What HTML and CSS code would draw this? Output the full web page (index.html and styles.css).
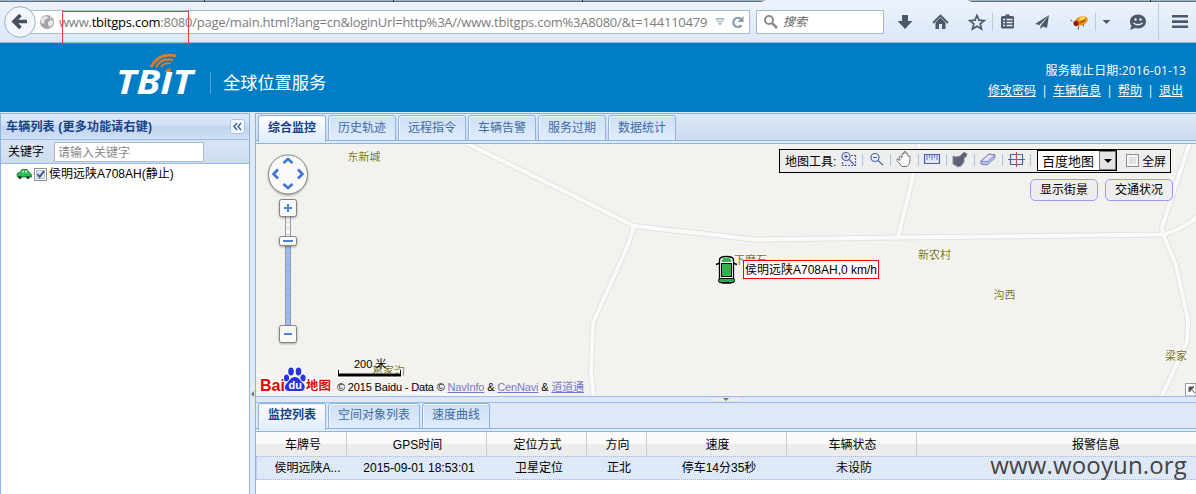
FILE: index.html
```html
<!DOCTYPE html>
<html lang="zh-CN">
<head>
<meta charset="utf-8">
<title>TBIT 全球位置服务</title>
<link rel="stylesheet" href="styles.css">
</head>
<body>
<div class="browser">
  <svg class="tab-edges" viewBox="0 0 1196 2" width="1196" height="2"><path d="M0 0H766L762 2H0zM967 0H1196V2H971z" fill="#9fb3c9"/><path d="M0 1.5H762M971 1.5H1196" stroke="#5f7080"/><path d="M204.500 0V2M582.500 0V2M393.500 0V2M1150.500 0V2" stroke="#333"/></svg>
  <div class="url">
    <svg class="globe" width="16" height="16" viewBox="0 0 16 16"><circle cx="8" cy="8" r="7" fill="#a5a5a5"/><path d="M2 5l4-3 3 1-1 2-3 1 1 2-2 2-2-2zM9 8l3-2 2 1v3l-3 3-2-2zM11 2l2 2-2 1z" fill="#e9e9e9"/></svg>
    <span class="address">www.<b>tbitgps.com</b>:8080/page/main.html?lang=cn&amp;loginUrl=http%3A//www.tbitgps.com%3A8080/&amp;t=1441104793</span>
    <svg class="url-tools" width="32" height="16" viewBox="0 0 32 16"><path d="M2 4.500h8L6 11z" fill="#d5dde6" stroke="#a5b3c2"/><path d="M27.500 11.200a4.600 4.600 0 1 1-.3-6" fill="none" stroke="#8799ac" stroke-width="2.200"/><path d="M29.500 2v6h-6z" fill="#8799ac"/></svg>
  </div>
  <svg class="back" width="32" height="32" viewBox="0 0 32 32"><circle cx="16" cy="16" r="15.300" fill="#f3f7fd" stroke="#9aaec9"/><path d="M23 15.500H12M16.500 9l-6.500 6.500L16.500 22" fill="none" stroke="#46525f" stroke-width="3.600"/></svg>
  <div class="search">
    <svg width="16" height="16" viewBox="0 0 16 16"><circle cx="6" cy="6" r="4" fill="none" stroke="#8b8b8b" stroke-width="2"/><path d="M9 9l5 5" stroke="#8b8b8b" stroke-width="2.500"/></svg>
    <i>搜索</i>
  </div>
  <svg class="actions" width="298" height="40" viewBox="898 0 298 40">
    <g fill="#4d5966">
      <path d="M902 15h6v6h4.500L905 29l-7.500-8H902z"/>
      <path d="M940.500 17.500l-5 5v6.500h3.500v-5h3v5h3.500v-6.500z"/>
      <path d="M1001 17.500q0-1.500 1.500-1.500h3v-1.500h4V16h3q1.500 0 1.500 1.500V27q0 1.500-1.500 1.500h-10q-1.500 0-1.500-1.500z"/>
      <path d="M1049 15l-14 9 4.500 1zM1049 15l-8.500 11v3l2.500-2.500 4 1.500z"/>
      <path d="M1102.500 20h8l-4 4z"/>
      <path d="M1138 14.500c4.500 0 8 3 8 7s-3.500 7-8 7l-3-.5-5 2 1.500-4c-1-1-1.500-3-1.500-4.500 0-4 3.500-7 8-7z"/>
      <path d="M1172 15h16v2.600h-16zM1172 20.300h16v2.600h-16zM1172 25.500h16v2.600h-16z"/>
    </g>
    <path d="M933 23l7.500-7.500L948 23" fill="none" stroke="#4d5966" stroke-width="1.800"/>
    <path d="M977 15.500l2 4.700 5.200.4-4 3.300 1.300 5-4.500-2.700-4.500 2.700 1.300-5-4-3.300 5.200-.4z" fill="none" stroke="#4d5966" stroke-width="1.700"/>
    <path d="M1003 19.500h2M1006.500 19.500h6M1003 22.500h2M1006.500 22.500h6M1003 25.500h2M1006.500 25.500h6" stroke="#e8f0f9" stroke-width="1.500"/>
    <circle cx="1135.500" cy="19.500" r="1.200" fill="#e8f0f9"/><circle cx="1140.500" cy="19.500" r="1.200" fill="#e8f0f9"/><path d="M1133.500 23q4.500 3.500 9 0" fill="none" stroke="#e8f0f9" stroke-width="1.300"/>
    <g transform="rotate(-22 1081 21)"><ellipse cx="1081" cy="21" rx="7" ry="4.300" fill="#f28a12"/><ellipse cx="1083" cy="19" rx="3.500" ry="1.500" fill="#ffd75a"/><circle cx="1075.500" cy="21.500" r="2.600" fill="#8d1d0e"/><path d="M1073 18l-1.500-2M1077 25l-2 3M1082 25l-1 2M1079 22h6" stroke="#4a2a12" stroke-width=".7"/></g>
    <path d="M992.500 13v18M1095.500 13v18M1158.500 3v37" stroke="#bccad9"/>
  </svg>
  <div class="highlight"></div>
</div>

<header class="header">
  <svg class="logo" width="80" height="48" viewBox="116 50 80 48">
    <text class="logo-text" x="116" y="94" textLength="77" lengthAdjust="spacingAndGlyphs">TBIT</text>
    <path d="M164 68h10l-1 4h-9z" fill="#007dc5"/>
    <g fill="none" stroke="#e37d22"><path d="M151 67q8-15 25-11" stroke-width="2.600"/><path d="M156 67q6-10 17-7" stroke-width="2.200"/><path d="M161 67q4-5 10-3.500" stroke-width="1.800"/></g>
    <path d="M165 72q1-4 6-3.500l-.5 3.500z" fill="#e37d22"/>
  </svg>
  <span class="slogan">全球位置服务</span>
  <div class="account">
    <div class="expiry">服务截止日期:2016-01-13</div>
    <nav><a>修改密码</a><i>|</i><a>车辆信息</a><i>|</i><a>帮助</a><i>|</i><a>退出</a></nav>
  </div>
</header>

<div class="workspace">
  <aside class="sidebar">
    <div class="panel-title"><b>车辆列表 (更多功能请右键)</b>
      <svg width="15" height="15" viewBox="0 0 15 15"><rect x=".5" y=".5" width="14" height="14" rx="2" fill="#f3f8ff" stroke="#a4c3ee"/><path d="M7 4L4 7.500 7 11M11 4L8 7.500l3 3.500" fill="none" stroke="#2b5ba8" stroke-width="1.300"/></svg>
    </div>
    <div class="filter"><label>关键字</label><div class="field">请输入关键字</div></div>
    <div class="vehicle">
      <svg width="16" height="12" viewBox="0 0 16 12"><path d="M1 6q0-1 3-1.500L6 1.500h5L13.500 5q2 .5 2 3v1h-14z" fill="#2bbf55" stroke="#0b5a22" stroke-width=".8"/><path d="M5.500 4.500L7 2.500h1v2zM9 2.500h1.500l1.500 2H9z" fill="#c9f0d2"/><circle cx="4" cy="9.500" r="1.600" fill="#064014"/><circle cx="12" cy="9.500" r="1.600" fill="#064014"/></svg>
      <svg width="13" height="13" viewBox="0 0 13 13"><rect x=".5" y=".5" width="12" height="12" fill="#fff" stroke="#8e8f8f"/><rect x="2.500" y="2.500" width="8" height="8" fill="#e3e7ed" stroke="#bcc3cd"/><path d="M3.500 6l2.200 3L10 3" fill="none" stroke="#35538f" stroke-width="1.900"/></svg>
      <span>侯明远陕A708AH(静止)</span>
    </div>
  </aside>
  <div class="splitter"><svg width="5" height="32" viewBox="0 0 5 32"><path d="M5 0L0 5v22l5 5z" fill="#e9edf3" stroke="#cfd6df" stroke-width=".6"/><path d="M4 13v6l-3-3z" fill="#777"/></svg></div>

  <main class="content">
    <div class="tabs">
      <div class="tab active">综合监控</div><div class="tab">历史轨迹</div><div class="tab">远程指令</div><div class="tab">车辆告警</div><div class="tab">服务过期</div><div class="tab">数据统计</div>
    </div>
    <div class="map">
      <svg class="layer" width="940" height="252" viewBox="256 144 940 252">
        <g class="road-edge"><use href="#roads"/></g>
        <g class="road-fill"><g id="roads"><path d="M464 142L560 189 634 226 755 239.500 898 237.500 1163 234.500Q1186 228 1200 214"/><path d="M634 226L628 245 593 323 591 372 594 398"/><path d="M920 142L911 185 898 237"/><path d="M1190 142L1162 227 1163 234 1176 265 1188 320 1187 342 1161 398"/></g></g>
        <path d="M256 374C330 392 420 394 500 396" fill="none" stroke="#fafafa" stroke-width="2"/>
        <g class="place"><text x="347.500" y="161">东新城</text><text x="918" y="259">新农村</text><text x="993.500" y="299">沟西</text><text x="1165" y="359.500">梁家</text><text x="734" y="264">下磨石</text><text x="372" y="375">葛家沟</text></g>

        <g class="pan"><circle cx="288" cy="174.500" r="19.500" fill="#f9f9f9" stroke="#8a8a8a"/><path d="M283.500 163l4.500-4 4.500 4M283.500 184l4.500 4 4.500-4M278 169.500l-4.500 4.500 4.500 4.500M298 169.500l4.500 4.500-4.500 4.500" fill="none" stroke="#3c72d1" stroke-width="2.500"/></g>
        <g><rect x="285.500" y="216" width="5" height="110" fill="#f4f4f4" stroke="#9a9a9a"/><rect x="286" y="245" width="4" height="80" fill="#9ebcf3"/><path d="M288 222V324" stroke="#8098c8" stroke-width="4" stroke-dasharray="1 5" opacity=".35"/></g>
        <g class="pan" fill="#f9f9f9" stroke="#858585"><rect x="279.500" y="199.500" width="17" height="17" rx="2"/><rect x="279.500" y="236.500" width="17" height="9" rx="2"/><rect x="279.500" y="325.500" width="17" height="17" rx="2"/></g>
        <path d="M284 208h8M288 204v8M283 241h10M284 334h8" stroke="#4b82e0" stroke-width="2"/>

        <path d="M338.500 370v5.500h62V370" fill="none" stroke="#fff" stroke-width="4"/><path d="M338.500 370v5.500h62V370" fill="none" stroke="#000"/><path d="M338 375h63" stroke="#000" stroke-width="3"/>
        <text class="scale" x="354" y="368">200 米</text>

        <g class="baidu"><text x="260" y="391" font-size="17" textLength="25" lengthAdjust="spacingAndGlyphs">Bai</text><text x="306" y="390" font-size="12.500" textLength="25">地图</text></g>
        <g fill="#2932e1" stroke="#fff" stroke-width="1.500" paint-order="stroke"><ellipse cx="291" cy="371.500" rx="2.800" ry="4"/><ellipse cx="298.500" cy="371.500" rx="2.800" ry="4"/><ellipse cx="286.500" cy="378" rx="2.600" ry="3.600"/><ellipse cx="303" cy="378" rx="2.600" ry="3.600"/><path d="M295 377c4 0 5 4 8 6 3 3 2 8-2 8h-12c-5 0-5-5-2-8s4-6 8-6z"/></g>
        <text class="du" x="288.500" y="389">du</text>

        <g stroke="#000"><path d="M716 264.500l4-1.500M737 264.500l-4-1.500" stroke-width="1.500"/><path d="M719.500 260q0-3.500 7-3.500t7 3.500v19q0 4-3 4h-8q-3 0-3-4z" fill="#fff" stroke-width="1.300"/><path d="M721 261l2.500-3h6l2.500 3-2 1h-7z" fill="#35b457" stroke="none"/><rect x="721.500" y="263.500" width="10" height="13" fill="#32b24c"/><rect x="718.500" y="278.500" width="16" height="4" rx="2" fill="#2ea84a"/></g>
      </svg>
      <div class="marker-label">侯明远陕A708AH,0 km/h</div>
      <div class="copyright">© 2015 Baidu - Data © <a>NavInfo</a> &amp; <a>CenNavi</a> &amp; <a>道道通</a></div>
      <div class="map-tools">
        <span class="tools-label">地图工具:</span>
        <svg width="197" height="22" viewBox="0 0 197 22"><g fill="none" stroke="#4e62ad" stroke-width="1.200"><circle cx="6" cy="6.500" r="4"/><path d="M9 9.500l5 5M4 6.500h4M6 4.500v4"/><path d="M2.500 12v4M2 15.500h14M15.500 5v11M11 5.500h5" stroke-dasharray="2 1"/><circle cx="35" cy="7.500" r="4"/><path d="M38 10.500l5 4.500M33 7.500h4"/><path d="M84.500 4.500h15v9h-15z" fill="#e2e6fa"/><path d="M87 5v5M89.500 5v3M92 5v5M94.500 5v3M97 5v5" stroke="#7b88ce"/><path d="M170.500 4.500h12v10h-12zM168 9.500h17" /><path d="M176.500 2v15" stroke="#c0506a"/></g><path d="M59 9c-2-3 0-4 2-1V4q1-2 2 0V2q1.500-1 2 0v2q1.500-1.500 2 .5v2q1.500-1.500 2 0c0 5 0 7-3 10h-5l-5-6c-1-2 1-2 3 0z" transform="translate(1 0)" fill="#fff" stroke="#6d6d6d"/><path d="M113 6l3 1 4-1 3-3 1-1 3 2-1 3-2 1v4l-3 4-3 1-3-2-2-1z" fill="#5e6274" stroke="#8a91a6"/><path d="M141 11l8-7 6 1-7 8-6 1z" fill="#e2e5fa" stroke="#6470b4"/><path d="M141 11l6 1 8-7v3l-8 7-6-1z" fill="#bcc3ec" stroke="#6470b4" stroke-width=".8"/><path d="M22.500 4v12M50.500 4v12M78.500 4v12M106.500 4v12M134.500 4v12M162.500 4v12M190.500 4v12" stroke="#9dc3f2"/></svg>
        <div class="select"><span>百度地图</span><b></b></div>
        <i class="check"></i><span class="full">全屏</span>
      </div>
      <div class="map-buttons"><div>显示街景</div><div>交通状况</div></div>
      <svg class="overview" width="11" height="13" viewBox="0 0 11 13"><path d="M.5 13V.5H11V13z" fill="#fff" stroke="#999"/><path d="M4 4h5L4 9zM6 6l4 4" fill="#555" stroke="#555"/></svg>
    </div>
    <div class="split-row"><svg width="36" height="5" viewBox="0 0 36 5"><path d="M1 0h34l-4 5H5z" fill="#e9edf3" stroke="#d0d5dc" stroke-width=".6"/><path d="M15 1h6l-3 3z" fill="#777"/></svg></div>
    <div class="tabs lower"><div class="tab active">监控列表</div><div class="tab">空间对象列表</div><div class="tab">速度曲线</div></div>
    <div class="grid grid-head"><span>车牌号</span><span>GPS时间</span><span>定位方式</span><span>方向</span><span>速度</span><span>车辆状态</span><span>报警信息</span></div>
    <div class="grid grid-row"><span>侯明远陕A...</span><span>2015-09-01 18:53:01</span><span>卫星定位</span><span>正北</span><span>停车14分35秒</span><span>未设防</span><span></span></div>
    <div class="watermark">www.wooyun.org</div>
  </main>
</div>
</body>
</html>
```
FILE: styles.css
```css
* { box-sizing: border-box; }
body { margin: 0; width: 1196px; height: 494px; overflow: hidden; display: flex; flex-direction: column; font: 12px/16px "Liberation Sans", "Noto Sans CJK SC", sans-serif; color: #000; background: #dfe8f6; }
svg { display: block; flex: none; }

.browser { position: relative; height: 43px; flex: none; display: flex; align-items: flex-start; padding: 10px 0 0 19px; background: linear-gradient(#edf3fc, #dae8f8); border-bottom: 1px solid #9fb6cd; }
.tab-edges { position: absolute; left: 0; top: 0; }
.url { width: 731px; height: 24px; display: flex; align-items: center; border: 1px solid #a9b9ce; background: #fff; padding-left: 19px; }
.globe { margin-right: 4px; }
.address { width: 649px; white-space: nowrap; overflow: hidden; font: 13px/22px "Open Sans", sans-serif; letter-spacing: -.24px; color: #7c7c7c; }
.address b { font-weight: 400; color: #000; }
.url-tools { margin-left: 6px; }
.back { position: absolute; left: 4px; top: 6px; }
.search { width: 128px; height: 24px; margin-left: 6px; display: flex; align-items: center; gap: 4px; padding-left: 6px; background: #fff; border: 1px solid #a9b9ce; color: #666; }
.actions { position: absolute; left: 898px; top: 0; overflow: hidden; }
.highlight { position: absolute; left: 62px; top: 11px; width: 127px; height: 33px; border: 1px solid #f03a3a; z-index: 2; }

.header { height: 69px; flex: none; display: flex; background: #007dc5; color: #fff; border-bottom: 1px solid #0478b8; }
.logo { margin: 7px 0 0 116px; overflow: visible; }
.logo-text { font: italic 700 34px "Open Sans", sans-serif; fill: #fff; }
.slogan { align-self: flex-start; margin: 29px 0 0 14px; padding-left: 12px; border-left: 1px solid #4aa3d8; font-size: 17.200px; line-height: 22px; }
.account { margin-left: auto; padding: 18px 10px 0 0; text-align: right; line-height: 20px; font-family: "Open Sans", "Noto Sans CJK SC", sans-serif; }
.expiry { letter-spacing: .16px; }
.account nav { display: flex; justify-content: flex-end; padding-right: 3px; }
.account a { text-decoration: underline; }
.account i { width: 17px; text-align: center; font-style: normal; }

.workspace { flex: 1; display: flex; min-height: 0; padding-top: 1px; }
.sidebar { width: 250px; border: 1px solid #8db2e3; border-bottom: 0; background: #fff; }
.panel-title { height: 25px; display: flex; align-items: center; justify-content: space-between; padding: 0 4px 0 5px; background: linear-gradient(#dce9f9 0, #d0e0f5 45%, #bfd4ef 50%, #d0e0f5); color: #15428b; letter-spacing: .2px; }
.filter { height: 25px; display: flex; align-items: center; padding-left: 7px; border-top: 1px solid #99bbe8; border-bottom: 1px solid #99bbe8; background: linear-gradient(#d9e5f5, #cddcf0); }
.filter label { width: 46px; }
.field { width: 150px; height: 20px; border: 1px solid #b5b8c8; background: #fff; padding: 2px 3px 0; color: #888; }
.vehicle { display: flex; align-items: center; height: 20px; padding-left: 15px; }
.vehicle svg + svg { margin: 0 2px 0 2px; }
.splitter { width: 5px; display: flex; align-items: center; padding-top: 180px; }

.content { position: relative; flex: 1; min-width: 0; display: flex; flex-direction: column; border-left: 1px solid #8db2e3; border-top: 1px solid #8db2e3; background: #fff; }
.tabs { height: 30px; flex: none; display: flex; align-items: flex-start; gap: 2px; padding: 1px 0 0 2px; background: linear-gradient(#dde8f5 0, #cbdcf0 26px, #8db2e3 26px, #8db2e3 27px, #deecfd 27px, #deecfd 29px, #8db2e3 29px); }
.tab { height: 26px; padding: 4px 9px 0; border: 1px solid #8db2e3; border-radius: 3px 3px 0 0; background: linear-gradient(#cfe0f6, #dfecfb); color: #416aa3; box-shadow: inset 1px 1px #edf5ff; white-space: nowrap; }
.tab.active { height: 27px; border-bottom: 0; background: linear-gradient(#fff, #deecfd); color: #15428b; font-weight: 700; }
.tabs.lower { padding-top: 0; background: linear-gradient(#dfe8f6 0, #dfe8f6 25px, #8db2e3 25px, #8db2e3 26px, #deecfd 26px, #deecfd 28px, #8db2e3 28px); border-top: 1px solid #99bbe8; }
.lower .tab { padding-top: 3px; }

.map { position: relative; height: 252px; flex: none; background: #f3f2ee; overflow: hidden; }
.layer { position: absolute; left: 0; top: 0; }
.road-edge { fill: none; stroke: #e2e2e0; stroke-width: 6; }
.road-fill { fill: none; stroke: #fafafa; stroke-width: 4; stroke-linejoin: round; }
.place { font-size: 11px; fill: #77741a; paint-order: stroke; stroke: #fff; stroke-width: 1px; }
.pan { filter: drop-shadow(0 1px 1px #0005); }
.scale { font-size: 11px; }
.baidu { font-weight: 700; fill: #e10601; stroke: #fff; stroke-width: 3px; paint-order: stroke; }
.du { font: 700 11px "Liberation Sans", sans-serif; fill: #fff; }
.marker-label { position: absolute; left: 487px; top: 116px; width: 136px; height: 19px; border: 1px solid #f00; background: #fff; padding-left: 1px; line-height: 18px; white-space: nowrap; }
.copyright { position: absolute; left: 81px; top: 235px; font-size: 11px; letter-spacing: -.16px; white-space: nowrap; }
.copyright a { color: #7777cc; text-decoration: underline; }
.map-tools { position: absolute; left: 523px; top: 5px; width: 392px; height: 24px; display: flex; border: 1px solid #000; background: #eee; white-space: nowrap; }
.tools-label { width: 55px; padding: 4px 0 0 5px; }
.map-tools > svg { margin-left: 5px; }
.select { width: 80px; height: 21px; display: flex; border: 1px solid #000; background: #fff; padding-left: 4px; font-size: 13px; line-height: 22px; }
.select b { width: 17px; height: 19px; margin-left: auto; border: 1px solid #777; background: #e3e3e3; display: flex; justify-content: center; align-items: center; }
.select b::after { content: ""; border: 4px solid transparent; border-top-color: #000; border-bottom: 0; }
.check { width: 13px; height: 13px; margin: 4px 3px 0 9px; border: 1px solid #8e8f8f; background: #dfe2e5; box-shadow: inset 0 0 0 2px #f6f6f6; }
.full { padding-top: 4px; }
.map-buttons { position: absolute; left: 774px; top: 35px; display: flex; gap: 7px; }
.map-buttons div { width: 68px; height: 22px; border: 1px solid #99f; border-radius: 5px; background: #eee; text-align: center; line-height: 21px; }
.overview { position: absolute; right: 0; bottom: 0; }
.split-row { height: 6px; flex: none; display: flex; justify-content: center; background: #dfe8f6; border-top: 1px solid #99bbe8; }

.grid { display: grid; grid-template-columns: 91px 140px 100px 60px 140px 130px 1fr; height: 24px; flex: none; line-height: 24px; text-align: center; white-space: nowrap; }
.grid span { padding-left: 2px; }
.grid span:last-child { padding-left: 79px; }
.grid-head { background: linear-gradient(#fafafa 50%, #ececec 50%); line-height: 26px; }
.grid-head span { border-right: 1px solid #ccc; }
.grid-head span:first-child { padding-left: 4px; }
.grid-head span:last-child { border-right: 0; }
.grid-row { background: #dfe8f6; border: 1px dotted #a3bae9; border-width: 1px 0 1px 1px; line-height: 22px; }
.grid-row span:first-child { padding-left: 10px; }
.watermark { position: absolute; right: 9px; top: 339px; font: 24px/24px "Open Sans", sans-serif; letter-spacing: .15px; color: #444; }
```
